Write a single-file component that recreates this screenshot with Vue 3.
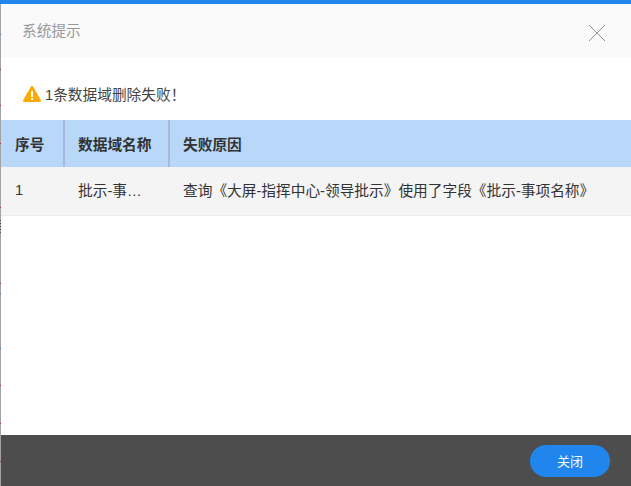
<script setup>
const rows = [{ no: '1', name: '批示-事项名称', reason: '查询《大屏-指挥中心-领导批示》使用了字段《批示-事项名称》' }]

// 1px ticks left by the page behind the dialog, visible down its left edge
const ticks = [
  [34, '#2f7fd0'], [69, '#a33a3a'], [105, '#a33a3a'], [143, '#a33a3a'], [207, '#a33a3a'],
  [220, '#555'], [223, '#444'], [226, '#555'], [229, '#444'], [232, '#555'],
  [283, '#a33a3a'], [293, '#2f7fd0'], [348, '#2f7fd0'], [385, '#a33a3a'], [423, '#a33a3a'], [461, '#a33a3a']
]
</script>

<template>
  <div class="dialog">
    <i v-for="t in ticks" :key="t[0]" class="tick" :style="{ top: t[0] + 'px', background: t[1] }"></i>
    <header class="head">
      <span class="title">系统提示</span>
      <svg class="close" width="18" height="18" viewBox="0 0 18 18" aria-label="关闭">
        <path d="M1 1 17 17M17 1 1 17" stroke="#8f8f8f" stroke-width="1" fill="none" />
      </svg>
    </header>
    <main class="body">
      <div class="msg">
        <svg class="warn" width="18" height="16" viewBox="0 0 18 16">
          <path d="M9 0c.5 0 .9.3 1.200.7l7.500 13.200c.5.9 0 2.100-1 2.100H1.300c-1 0-1.500-1.200-1-2.100L7.800.7C8.100.3 8.500 0 9 0z" fill="#ffaa00" />
          <rect x="8" y="5" width="2" height="6" fill="#fff" />
          <rect x="8" y="12" width="2" height="2" fill="#fff" />
        </svg>
        <span>1条数据域删除失败！</span>
      </div>
      <div class="table">
        <div class="row th">
          <div class="c c1">序号</div>
          <div class="c c2">数据域名称</div>
          <div class="c c3">失败原因</div>
        </div>
        <div v-for="r in rows" :key="r.no" class="row td">
          <div class="c c1">{{ r.no }}</div>
          <div class="c c2"><span class="clip">{{ r.name }}</span></div>
          <div class="c c3">{{ r.reason }}</div>
        </div>
      </div>
    </main>
    <footer class="foot">
      <button class="btn">关闭</button>
    </footer>
  </div>
</template>

<style>
html, body { margin: 0; padding: 0; background: #fff; }
</style>

<style scoped>
.dialog {
  position: relative;
  width: 631px;
  height: 486px;
  box-sizing: border-box;
  display: flex;
  flex-direction: column;
  overflow: hidden;
  padding-top: 4px;
  padding-left: 1px;
  background: linear-gradient(#2086ee 0 4px, #a3a3a3 4px) left top / 1px 100% no-repeat, linear-gradient(#2086ee 0 4px, #fff 4px);
  font-family: "Liberation Sans", "Noto Sans CJK SC", sans-serif;
  font-size: 14.7px;
  color: #333;
}
.tick {
  position: absolute;
  left: 0;
  width: 1px;
  height: 1px;
}
.head {
  height: 53px;
  flex: none;
  display: flex;
  align-items: center;
  justify-content: space-between;
  padding: 0 25px 0 21px;
  background: #fafafa;
}
.title { color: #999; margin-bottom: 3px; }
.close { display: block; margin-top: 5px; }
.body { flex: 1; min-height: 0; }
.msg {
  height: 63px;
  box-sizing: border-box;
  padding: 10px 0 0 22px;
  display: flex;
  align-items: center;
  gap: 4px;
  color: #444;
}
.warn { display: block; flex: none; }
.row { display: flex; }
.th {
  height: 47px;
  background: #b9d8f9;
  font-weight: 700;
  color: #333;
}
.th .c1, .th .c2 { border-right: 2px solid #a7b8dc; }
.td {
  height: 49px;
  box-sizing: border-box;
  background: #f4f4f4;
  border-bottom: 1px solid #ececec;
}
.td .c { padding-bottom: 3px; }
.c {
  box-sizing: border-box;
  display: flex;
  align-items: center;
  padding-left: 13px;
  flex: none;
  white-space: nowrap;
}
.c1 { width: 64px; padding-left: 14px; }
.c2 { width: 105px; }
.c3 { flex: 1; }
.clip {
  display: block;
  width: 65px;
  overflow: hidden;
  text-overflow: ellipsis;
}
.foot {
  height: 51px;
  flex: none;
  display: flex;
  align-items: center;
  justify-content: flex-end;
  padding-right: 21px;
  background: #4d4d4d;
}
.btn {
  width: 80px;
  height: 32px;
  border: 0;
  border-radius: 16px;
  background: #2086ee;
  color: #fff;
  font: inherit;
  font-size: 13px;
  padding: 0;
}
</style>
